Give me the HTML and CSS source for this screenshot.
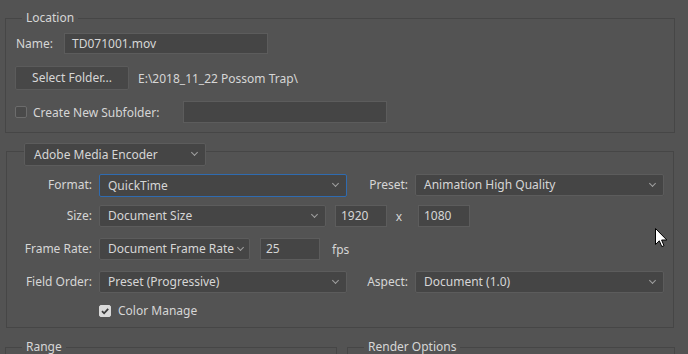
FILE: index.html
```html
<!DOCTYPE html>
<html lang="en">
<head>
    <meta charset="UTF-8">
    <title>Render Video</title>
    <link rel="stylesheet" href="styles.css">
</head>
<body>
    <div class="dialog">
        <fieldset class="group location">
            <legend>Location</legend>
            <div class="row row-name">
                <span class="lbl-name">Name:</span>
                <div class="field w-name">TD071001.mov</div>
            </div>
            <div class="row row-folder">
                <div class="btn">Select Folder...</div>
                <span class="path">E:\2018_11_22 Possom Trap\</span>
            </div>
            <div class="row row-sub">
                <span class="check"></span>
                <span class="lbl-sub">Create New Subfolder:</span>
                <div class="field w-sub"></div>
            </div>
        </fieldset>

        <fieldset class="group encoder">
            <legend><div class="select w-enc">Adobe Media Encoder</div></legend>
            <div class="grid">
                <span class="lbl">Format:</span>
                <div class="select focus">QuickTime</div>
                <span class="lbl">Preset:</span>
                <div class="select">Animation High Quality</div>

                <span class="lbl">Size:</span>
                <div class="span3 inline">
                    <div class="select w-size">Document Size</div>
                    <div class="field w-num">1920</div>
                    <span class="times">x</span>
                    <div class="field w-num">1080</div>
                </div>

                <span class="lbl">Frame Rate:</span>
                <div class="span3 inline">
                    <div class="select w-rate">Document Frame Rate</div>
                    <div class="field w-fps">25</div>
                    <span class="fps">fps</span>
                </div>

                <span class="lbl">Field Order:</span>
                <div class="select">Preset (Progressive)</div>
                <span class="lbl">Aspect:</span>
                <div class="select">Document (1.0)</div>

                <span></span>
                <div class="span3 inline cm">
                    <span class="check on">
                        <svg width="12" height="12" viewBox="0 0 12 12"><path d="M3 6.2 L5.1 8.3 L9.2 3.8" fill="none" stroke="#3a3a3a" stroke-width="1.8"/></svg>
                    </span>
                    <span class="lbl-cm">Color Manage</span>
                </div>
            </div>
        </fieldset>

        <div class="bottom">
            <fieldset class="group range"><legend>Range</legend></fieldset>
            <fieldset class="group render"><legend>Render Options</legend></fieldset>
        </div>
    </div>

    <svg class="cursor" width="13" height="20" viewBox="0 0 13 20">
        <path d="M0.5 0.5 L0.5 16.5 L4.3 12.8 L6.8 18.6 L9 17.7 L6.6 12 L11.8 12 Z" fill="#fff" stroke="#000" stroke-width="1"/>
    </svg>
</body>
</html>
```

FILE: styles.css
```css
body {
    margin: 0;
    background: #535353;
    font-family: "Noto Sans", "Open Sans", sans-serif;
    font-size: 12px;
    color: #d6d6d6;
    overflow: hidden;
    height: 354px;
}
.dialog {
    width: 670px;
    padding-left: 5px;
}
.group {
    margin: 0;
    padding: 0;
    border: 1px solid #464646;
    min-width: 0;
}
.group > legend {
    margin-left: 16px;
    padding: 0 4px;
    line-height: 16px;
    height: 16px;
}
.location {
    margin-top: 10px;
    padding: 7px 0 9px;
}
.row {
    display: flex;
    align-items: center;
    padding-left: 9px;
}
.row-name { height: 21px; }
.row-folder { height: 24px; margin-top: 12px; }
.row-sub { height: 22px; margin-top: 11px; }
.lbl-name {
    width: 48px;
    padding-left: 1px;
}
.field {
    box-sizing: border-box;
    height: 22px;
    line-height: 20px;
    background: #454545;
    border: 1px solid #5c5c5c;
    padding: 0 7px;
    white-space: nowrap;
}
.w-name { width: 204px; height: 21px; line-height: 19px; }
.w-sub { width: 204px; }
.btn {
    box-sizing: border-box;
    width: 114px;
    height: 24px;
    line-height: 22px;
    text-align: center;
    background: #474747;
    border: 1px solid #5b5b5b;
    border-radius: 2px;
}
.path { margin-left: 9px; }
.check {
    box-sizing: border-box;
    display: inline-block;
    width: 12px;
    height: 12px;
    border: 1px solid #6c6c6c;
    border-radius: 2px;
    background: #4a4a4a;
}
.check.on {
    background: #d9d9d9;
    border-color: #d9d9d9;
    position: relative;
}
.check.on svg {
    position: absolute;
    left: -1px;
    top: -1px;
}
.lbl-sub { margin-left: 6px; width: 150px; }

.encoder {
    margin: 10px 1px 0;
    padding: 15px 0 9px;
}
.encoder > legend {
    margin-left: 17px;
    padding: 0;
    height: auto;
}
.select {
    box-sizing: border-box;
    position: relative;
    height: 22px;
    line-height: 20px;
    background: #454545;
    border: 1px solid #5c5c5c;
    border-radius: 2px;
    padding: 0 20px 0 8px;
    white-space: nowrap;
}
.select::after {
    content: "";
    position: absolute;
    right: 8px;
    top: 6px;
    width: 4px;
    height: 4px;
    border-right: 1px solid #a0a0a0;
    border-bottom: 1px solid #a0a0a0;
    transform: rotate(45deg);
}
.w-enc {
    width: 182px;
    height: 23px;
    line-height: 21px;
    padding-left: 9px;
    margin-bottom: -7px;
}
.focus {
    height: 23px;
    line-height: 21px;
    border-color: #2f6bb0;
}
.grid {
    display: grid;
    grid-template-columns: 85px 248px 54px 249px;
    grid-template-rows: 31px 33px 33px 33px 14px;
    column-gap: 7px;
    align-items: start;
}
.lbl {
    text-align: right;
    line-height: 22px;
    white-space: nowrap;
}
.span3 { grid-column: 2 / 5; }
.inline {
    display: flex;
    align-items: center;
}
.w-size { width: 227px; }
.w-num { width: 52px; margin-left: 9px; padding: 0 5px; }
.times { width: 20px; margin-left: 2px; text-align: center; }
.w-rate { width: 151px; padding-right: 16px; }
.w-rate::after { right: 6px; }
.w-fps { width: 60px; margin-left: 10px; padding: 0 5px; }
.fps { margin-left: 12px; }
.cm { padding-top: 1px; }
.lbl-cm { margin-left: 7px; line-height: 12px; }

.bottom {
    display: flex;
    gap: 10px;
    margin-top: 11px;
}
.range { width: 332px; height: 14px; }
.render { width: 328px; height: 14px; }

.cursor {
    position: absolute;
    left: 655px;
    top: 228px;
}
```
